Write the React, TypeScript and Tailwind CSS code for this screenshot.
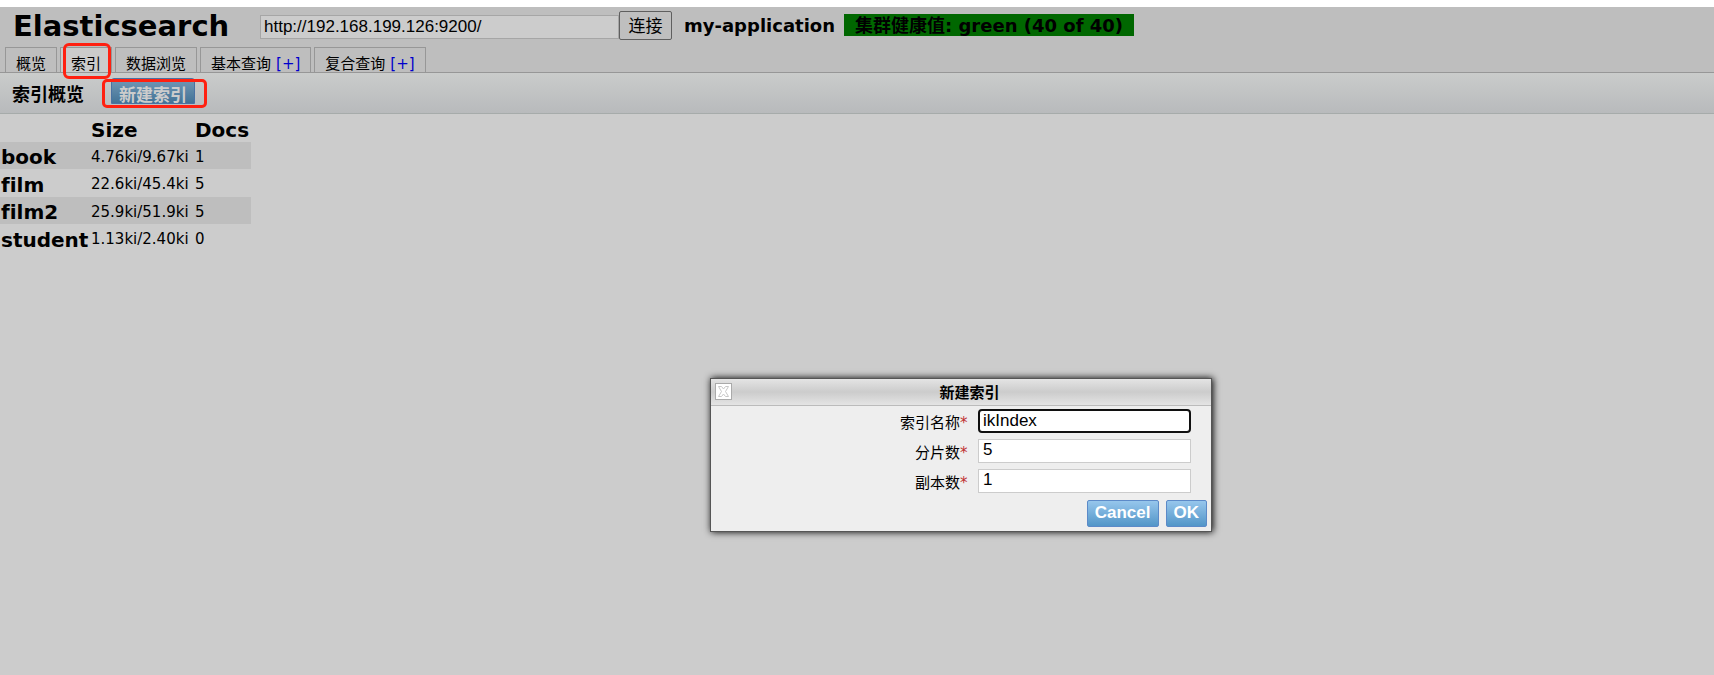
import { useState } from "react";

const tabs = [
  { label: "概览" },
  { label: "索引", selected: true },
  { label: "数据浏览" },
  { label: "基本查询", add: true },
  { label: "复合查询", add: true },
];

const indices = [
  { name: "book", size: "4.76ki/9.67ki", docs: 1 },
  { name: "film", size: "22.6ki/45.4ki", docs: 5 },
  { name: "film2", size: "25.9ki/51.9ki", docs: 5 },
  { name: "student", size: "1.13ki/2.40ki", docs: 0 },
];

function Header() {
  const [url, setUrl] = useState("http://192.168.199.126:9200/");
  return (
    <header className="border-b border-[#979797] bg-[#bebebe]">
      <div className="flex h-10 items-start pl-[13px]">
        <h1 className="mt-[2px] w-[247px] text-[29px] leading-[34px] font-bold">Elasticsearch</h1>
        <input
          aria-label="URL"
          value={url}
          onChange={(e) => setUrl(e.target.value)}
          className="mt-2 h-6 w-[359px] border border-[#a6a6a6] bg-[#cccccc] px-[3px] pb-px font-['Liberation_Sans'] text-[17px] outline-none"
        />
        <button className="mt-1 h-[29px] w-[53px] rounded-[2px] border border-[#5f5f5f] bg-[#bfbfbf] text-[17px] leading-[28px]">
          连接
        </button>
        <span className="mt-[7px] ml-3 h-[22px] text-[18px] leading-6 font-bold">my-application</span>
        <span className="mt-[7px] ml-[9px] h-[22px] bg-[#006700] px-[11px] text-[18px] leading-6 font-bold">
          集群健康值: green (40 of 40)
        </span>
      </div>
      <nav className="flex gap-[3px] pl-[5px]">
        {tabs.map((t) => (
          <div
            key={t.label}
            className={`relative flex h-[25px] items-end gap-[5px] border border-b-0 border-[#979797] px-[10px] text-[15px] leading-4 ${
              t.selected ? "bg-[#cbcbcb]" : ""
            }`}
          >
            <button>{t.label}</button>
            {t.add && (
              <a href="#add" className="text-[#0000cc]">
                [+]
              </a>
            )}
            {t.selected && (
              <span className="pointer-events-none absolute -top-[5px] right-0 left-[2px] z-10 h-9 rounded-[6px] border-[3px] border-[#ff2010]" />
            )}
          </div>
        ))}
      </nav>
    </header>
  );
}

function Toolbar() {
  return (
    <div className="flex h-[41px] items-start border-b border-[#a6abaa] bg-linear-to-b from-[#cacccb] to-[#b8babc] pl-3">
      <h2 className="mt-2 w-[99px] text-[18px] leading-7 font-bold">索引概览</h2>
      <div className="relative mt-[5px]">
        <button className="h-[26px] w-[84px] rounded-t-[3px] border border-[#4a72a3] bg-linear-to-b from-[#7398b6] to-[#427396] text-[17px] leading-[32px] font-bold text-[#cccccc]">
          新建索引
        </button>
        <span className="pointer-events-none absolute top-[1px] -right-3 -left-[9px] h-[29px] rounded-[5px] border-[3px] border-[#ff2010]" />
      </div>
    </div>
  );
}

function IndexTable() {
  return (
    <table className="text-left [font-variant-ligatures:none]">
      <thead>
        <tr className="h-7 text-[20px] leading-6">
          <td className="w-[91px]" />
          <th className="w-[104px] pt-1">Size</th>
          <th className="w-14 pt-1">Docs</th>
        </tr>
      </thead>
      <tbody>
        {indices.map((i) => (
          <tr key={i.name} className="h-[27px] text-[15px] leading-[23px] odd:bg-[#bebebe] even:h-7">
            <th className="pt-1 pl-px text-[20px]">{i.name}</th>
            <td className="pt-[3px]">{i.size}</td>
            <td className="pt-[3px]">{i.docs}</td>
          </tr>
        ))}
      </tbody>
    </table>
  );
}

function Field({ id, label, value, focused }: { id: string; label: string; value: string; focused?: boolean }) {
  return (
    <div className="flex items-center justify-end gap-[9px]">
      <label htmlFor={id} className="flex pt-1 text-[15px] leading-5">
        {label}
        <span className="w-[9px] text-[#c03030]">*</span>
      </label>
      <input
        id={id}
        defaultValue={value}
        className={`h-6 w-[213px] bg-white font-['Liberation_Sans'] text-[17px] leading-5 outline-none ${
          focused ? "rounded-[4px] border-2 border-[#101010] px-[3px] pb-px" : "border border-[#cccccc] px-1 pb-[2px]"
        }`}
      />
    </div>
  );
}

const blueButton =
  "h-[27px] rounded-[2px] border border-[#5c8ac8] bg-linear-to-b from-[#96c6ec] to-[#5296c8] px-[7px] pb-[2px] font-['Liberation_Sans'] text-[17px] leading-5 font-bold text-white";

function Dialog() {
  return (
    <div
      role="dialog"
      aria-labelledby="dialog-title"
      className="absolute top-[371px] left-[710px] w-[502px] border border-[#555555] bg-[#eeeeee] shadow-[1px_0px_7px_#000000]"
    >
      <div className="flex h-[27px] items-start border-b border-[#bbbbbb] bg-linear-to-b from-[#e4e4e4] via-[#cccccc] to-[#e4e4e4] px-1 pt-1">
        <button aria-label="Close" className="flex size-[17px] items-center justify-center border border-[#aaaaaa] bg-white">
          <svg viewBox="0 0 13 13" className="size-[13px]" fill="none" stroke="#c8c8c8">
            <path d="M1.5 1.5H4.5L6.5 4L8.5 1.5H11.5L8.5 6.5L11.5 11.5H8.5L6.5 9L4.5 11.5H1.5L4.5 6.5Z" />
          </svg>
        </button>
        <h3 id="dialog-title" className="flex-1 text-center text-[15px] leading-5 font-bold">
          新建索引
        </h3>
      </div>
      <div className="flex flex-col gap-[6px] pt-[3px] pr-5">
        <Field id="index-name" label="索引名称" value="ikIndex" focused />
        <Field id="shards" label="分片数" value="5" />
        <Field id="replicas" label="副本数" value="1" />
      </div>
      <div className="flex justify-end gap-[7px] pt-[7px] pr-1 pb-1">
        <button className={blueButton}>Cancel</button>
        <button className={blueButton}>OK</button>
      </div>
    </div>
  );
}

export default function App() {
  return (
    <div className="relative min-h-screen border-t-[7px] border-white bg-[#cccccc] font-['DejaVu_Sans','Noto_Sans_CJK_SC',sans-serif] text-black">
      <Header />
      <Toolbar />
      <IndexTable />
      <Dialog />
    </div>
  );
}
